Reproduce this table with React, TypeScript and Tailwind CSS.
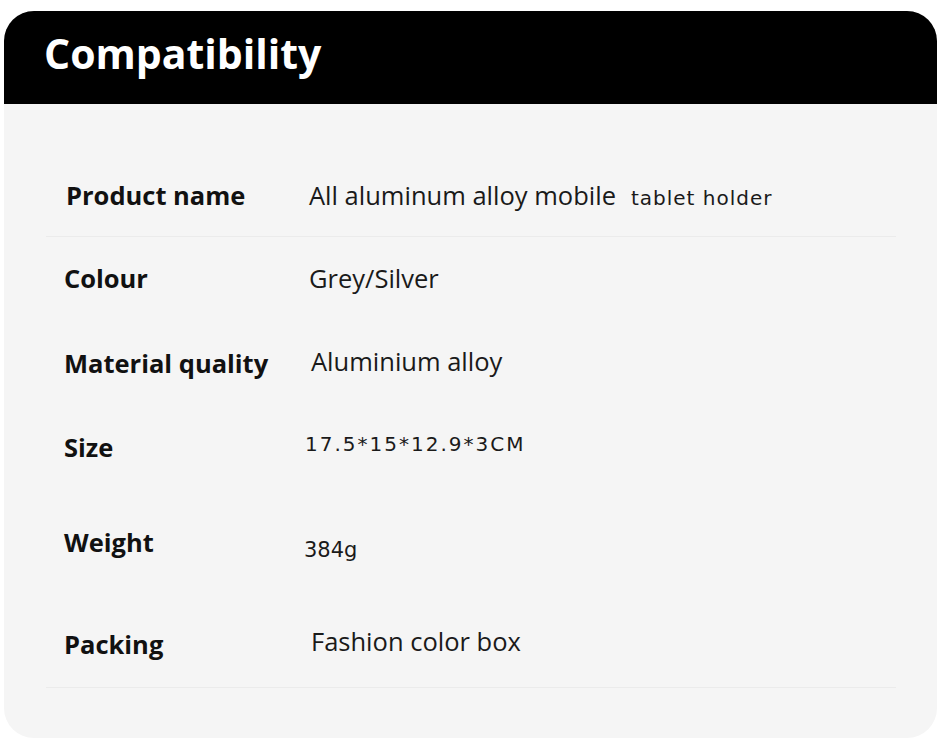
const rows = [
  { label: "Product name", h: "h-[82px]", line: true },
  { label: "Colour", h: "h-[83px]", line: false },
  { label: "Material quality", h: "h-[86px]", line: false },
  { label: "Size", h: "h-[82px]", line: false },
  { label: "Weight", h: "h-[114px]", line: false },
  { label: "Packing", h: "h-[86px]", line: true },
];

function Value({ i }: { i: number }) {
  const sans = "font-['Open_Sans',sans-serif] text-[25.5px] text-[#1a1a1a]";
  const dv = "font-['DejaVu_Sans',sans-serif] text-[#1a1a1a]";
  if (i === 0)
    return (
      <div className="flex items-baseline">
        <span className={sans}>All aluminum alloy mobile</span>
        <span className={`${dv} ml-[15px] text-[20px] tracking-[1px]`}>tablet holder</span>
      </div>
    );
  if (i === 1) return <span className={sans}>Grey/Silver</span>;
  if (i === 2) return <span className={`${sans} ml-[2px] -mt-[4px]`}>Aluminium alloy</span>;
  if (i === 3)
    return <span className={`${dv} -ml-[4px] -mt-[6px] text-[20px] tracking-[2px]`}>17.5*15*12.9*3CM</span>;
  if (i === 4)
    return <span className={`${dv} -ml-[5px] mt-[12px] text-[21px]`}>384g</span>;
  return <span className={`${sans} ml-[2px] -mt-[6px]`}>Fashion color box</span>;
}

export default function App() {
  return (
    <div className="min-h-[752px] bg-white pt-[11px] pl-[4px]">
      <div className="w-[933px] h-[727px] rounded-[30px] bg-[#f5f5f5] overflow-hidden">
        <div className="h-[93px] bg-black flex items-center pl-[40px] pb-[8px]">
          <h1 className="font-['Open_Sans',sans-serif] font-bold text-[41px] text-white">Compatibility</h1>
        </div>
        <div className="pt-[51px] ml-[42px] w-[850px]">
          {rows.map((r, i) => (
            <div
              key={r.label}
              className={`${r.h} flex items-center ${r.line ? "border-b border-[#ebebeb]" : ""}`}
            >
              <div
                className={`w-[263px] font-['Open_Sans',sans-serif] font-bold text-[25.5px] text-[#111] ${
                  i === 0 ? "pl-[20px]" : "pl-[18px]"
                } ${i === 4 ? "-mt-[6px]" : ""}`}
              >
                {r.label}
              </div>
              <Value i={i} />
            </div>
          ))}
        </div>
      </div>
    </div>
  );
}
